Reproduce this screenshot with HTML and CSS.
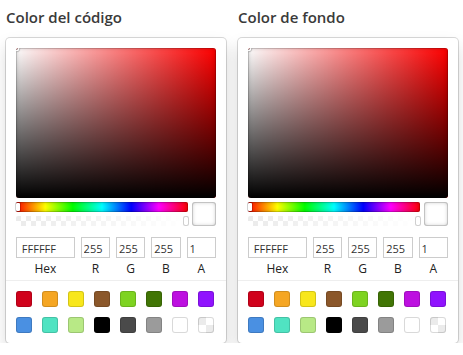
FILE: index.html
```html
<!DOCTYPE html>
<html lang="es">
<head>
    <meta charset="UTF-8">
    <title>Colores</title>
    <link rel="stylesheet" href="styles.css">
</head>
<body>
    <div class="pickers">
        <div class="picker_block">
            <div class="title">Color del código</div>
            <div class="sketch">
                <div class="saturation"><div class="sat_white"><div class="sat_black"></div></div><div class="sat_pointer"></div></div>
                <div class="controls">
                    <div class="sliders">
                        <div class="hue"><div class="slider_pointer"></div></div>
                        <div class="alpha"><div class="alpha_fade"></div><div class="slider_pointer right"></div></div>
                    </div>
                    <div class="active_color"></div>
                </div>
                <div class="fields">
                    <div class="field double"><input type="text" value="FFFFFF"><div class="label">Hex</div></div>
                    <div class="field"><input type="text" value="255"><div class="label">R</div></div>
                    <div class="field"><input type="text" value="255"><div class="label">G</div></div>
                    <div class="field"><input type="text" value="255"><div class="label">B</div></div>
                    <div class="field"><input type="text" value="1"><div class="label">A</div></div>
                </div>
                <div class="presets">
                    <div class="swatch" style="background:#D0021B"></div>
                    <div class="swatch" style="background:#F5A623"></div>
                    <div class="swatch" style="background:#F8E71C"></div>
                    <div class="swatch" style="background:#8B572A"></div>
                    <div class="swatch" style="background:#7ED321"></div>
                    <div class="swatch" style="background:#417505"></div>
                    <div class="swatch" style="background:#BD10E0"></div>
                    <div class="swatch" style="background:#9013FE"></div>
                    <div class="swatch" style="background:#4A90E2"></div>
                    <div class="swatch" style="background:#50E3C2"></div>
                    <div class="swatch" style="background:#B8E986"></div>
                    <div class="swatch" style="background:#000000"></div>
                    <div class="swatch" style="background:#4A4A4A"></div>
                    <div class="swatch" style="background:#9B9B9B"></div>
                    <div class="swatch" style="background:#FFFFFF"></div>
                    <div class="swatch transparent"></div>
                </div>
            </div>
        </div>
        <div class="picker_block">
            <div class="title">Color de fondo</div>
            <div class="sketch">
                <div class="saturation"><div class="sat_white"><div class="sat_black"></div></div><div class="sat_pointer"></div></div>
                <div class="controls">
                    <div class="sliders">
                        <div class="hue"><div class="slider_pointer"></div></div>
                        <div class="alpha"><div class="alpha_fade"></div><div class="slider_pointer right"></div></div>
                    </div>
                    <div class="active_color"></div>
                </div>
                <div class="fields">
                    <div class="field double"><input type="text" value="FFFFFF"><div class="label">Hex</div></div>
                    <div class="field"><input type="text" value="255"><div class="label">R</div></div>
                    <div class="field"><input type="text" value="255"><div class="label">G</div></div>
                    <div class="field"><input type="text" value="255"><div class="label">B</div></div>
                    <div class="field"><input type="text" value="1"><div class="label">A</div></div>
                </div>
                <div class="presets">
                    <div class="swatch" style="background:#D0021B"></div>
                    <div class="swatch" style="background:#F5A623"></div>
                    <div class="swatch" style="background:#F8E71C"></div>
                    <div class="swatch" style="background:#8B572A"></div>
                    <div class="swatch" style="background:#7ED321"></div>
                    <div class="swatch" style="background:#417505"></div>
                    <div class="swatch" style="background:#BD10E0"></div>
                    <div class="swatch" style="background:#9013FE"></div>
                    <div class="swatch" style="background:#4A90E2"></div>
                    <div class="swatch" style="background:#50E3C2"></div>
                    <div class="swatch" style="background:#B8E986"></div>
                    <div class="swatch" style="background:#000000"></div>
                    <div class="swatch" style="background:#4A4A4A"></div>
                    <div class="swatch" style="background:#9B9B9B"></div>
                    <div class="swatch" style="background:#FFFFFF"></div>
                    <div class="swatch transparent"></div>
                </div>
            </div>
        </div>
    </div>
</body>
</html>
```

FILE: styles.css
```css
body {
    margin: 0;
    background: #fff;
    font-family: "Open Sans", "Noto Sans", sans-serif;
    color: #333;
}

div.pickers {
    display: flex;
    gap: 12px;
    padding: 0 6px;
}

div.title {
    padding-top: 7px;
    margin-bottom: 11px;
    font-size: 15px;
    line-height: 20px;
    font-weight: 600;
    color: #3a3a3a;
}

div.sketch {
    width: 200px;
    padding: 10px 10px 0;
    background: #fff;
    border-radius: 4px;
    box-shadow: rgba(0, 0, 0, 0.15) 0 0 0 1px, rgba(0, 0, 0, 0.15) 0 8px 16px;
}

div.saturation {
    position: relative;
    height: 150px;
    border-radius: 3px;
    overflow: hidden;
    background: #f00;
}

div.sat_white, div.sat_black {
    position: absolute;
    inset: 0;
}

div.sat_white {
    background: linear-gradient(to right, #fff, rgba(255, 255, 255, 0));
}

div.sat_black {
    background: linear-gradient(to top, #000, rgba(0, 0, 0, 0));
    box-shadow: inset 0 0 0 1px rgba(0, 0, 0, 0.15), inset 0 0 4px rgba(0, 0, 0, 0.25);
}

div.sat_pointer {
    position: absolute;
    left: 0;
    top: 0;
    width: 4px;
    height: 4px;
    border-radius: 50%;
    transform: translate(-2px, -2px);
    box-shadow: 0 0 0 1.5px #fff, inset 0 0 1px 1px rgba(0, 0, 0, 0.3), 0 0 1px 2px rgba(0, 0, 0, 0.4);
}

div.controls {
    display: flex;
}

div.sliders {
    flex: 1;
    padding: 4px 0;
}

div.hue {
    position: relative;
    height: 10px;
    border-radius: 2px;
    background: linear-gradient(to right, #f00 0%, #ff0 17%, #0f0 33%, #0ff 50%, #00f 67%, #f0f 83%, #f00 100%);
    box-shadow: inset 0 0 0 1px rgba(0, 0, 0, 0.15), inset 0 0 4px rgba(0, 0, 0, 0.25);
}

div.alpha {
    position: relative;
    height: 10px;
    margin-top: 4px;
    border-radius: 2px;
    background: repeating-conic-gradient(#fff 0 25%, #ebebeb 0 50%) 0 0 / 10px 10px;
}

div.alpha_fade {
    position: absolute;
    inset: 0;
    border-radius: 2px;
    background: linear-gradient(to right, rgba(255, 255, 255, 0), #fff);
}

div.slider_pointer {
    position: absolute;
    left: 0;
    top: 1px;
    width: 4px;
    height: 8px;
    border-radius: 1px;
    background: #fff;
    box-shadow: 0 0 0 1px rgba(0, 0, 0, 0.15), 0 0 1px rgba(0, 0, 0, 0.4);
}

div.slider_pointer.right {
    left: auto;
    right: 0;
}

div.active_color {
    width: 24px;
    height: 24px;
    margin: 4px 0 0 4px;
    border-radius: 3px;
    background: #fff;
    box-shadow: inset 0 0 0 1px rgba(0, 0, 0, 0.15), inset 0 0 4px rgba(0, 0, 0, 0.25);
}

div.fields {
    display: flex;
    padding-top: 7px;
}

div.field {
    flex: 1;
    padding-left: 6px;
}

div.field.double {
    flex: 2;
    padding-left: 0;
}

div.field input {
    display: block;
    width: 100%;
    height: 21px;
    padding: 4px 10% 3px;
    box-sizing: border-box;
    border: none;
    outline: none;
    box-shadow: inset 0 0 0 1px #ccc;
    font-family: "Open Sans", "Noto Sans", sans-serif;
    font-size: 11px;
    color: #333;
}

div.field .label {
    text-align: center;
    font-size: 12px;
    line-height: 15px;
    padding: 3px 0 4px;
    color: #222;
}

div.presets {
    display: flex;
    flex-wrap: wrap;
    margin: 0 -10px;
    padding: 10px 0 0 10px;
    border-top: 1px solid #eee;
}

div.swatch {
    width: 16px;
    height: 16px;
    margin: 0 10px 10px 0;
    border-radius: 3px;
    box-shadow: inset 0 0 0 1px rgba(0, 0, 0, 0.15);
}

div.swatch.transparent {
    background: repeating-conic-gradient(#fff 0 25%, #ebebeb 0 50%) 0 0 / 16px 16px;
}
```
